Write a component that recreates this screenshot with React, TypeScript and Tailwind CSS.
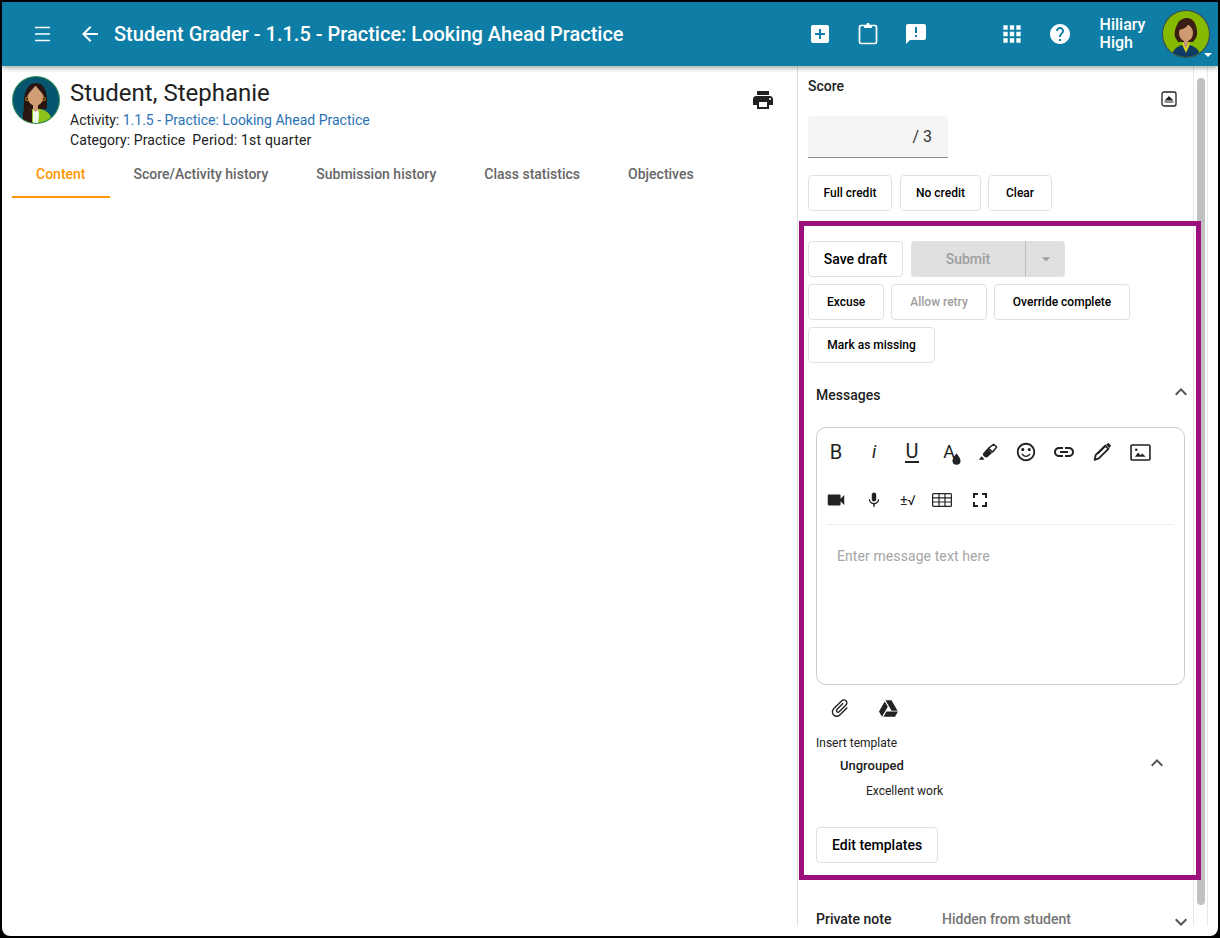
import { MdArrowBack, MdAddBox, MdAnnouncement, MdApps, MdHelp, MdPrint, MdExpandLess, MdExpandMore, MdSentimentSatisfiedAlt, MdLink, MdVideocam, MdMic, MdFullscreen, MdAttachFile, MdArrowDropDown } from 'react-icons/md'
import { FaGoogleDrive } from 'react-icons/fa'
import type { ReactNode } from 'react'

function StudentAvatar() {
  return (
    <svg viewBox="0 0 48 48" className="w-12 h-12 shrink-0">
      <defs>
        <clipPath id="sa"><circle cx="24" cy="24" r="23" /></clipPath>
      </defs>
      <circle cx="24" cy="24" r="24" fill="#2e8b57" />
      <circle cx="24" cy="24" r="23" fill="#07566f" />
      <g clipPath="url(#sa)">
        <path d="M12 26c0-12 5-19 12-19s11 7 11 17v9H22v15H11z" fill="#2a1512" />
        <path d="M11 48c0-9 3-13 9-15h8c8 2 12 6 12 15z" fill="#8cc21a" />
        <path d="M11 36l9-3v15h-9z" fill="#2a1512" />
        <path d="M21 33h5l1 5-1 10h-5z" fill="#eef5ea" />
        <path d="M21 27h5v7l-2.500 2-2.500-2z" fill="#cf9a72" />
        <ellipse cx="23.500" cy="20" rx="8" ry="10" fill="#d29e75" />
        <path d="M15.500 20c0-6 3-11 8-11-2 4-6 6-8 11zM31.500 20c0-6-3-11-8-11 2 4 6 6 8 11z" fill="#2a1512" />
        <circle cx="15.500" cy="23" r="1.800" fill="none" stroke="#c9962a" strokeWidth=".9" />
        <circle cx="31.500" cy="23" r="1.800" fill="none" stroke="#c9962a" strokeWidth=".9" />
      </g>
    </svg>
  )
}

function TeacherAvatar() {
  return (
    <svg viewBox="0 0 48 48" className="w-12 h-12">
      <defs>
        <clipPath id="ta"><circle cx="24" cy="24" r="23" /></clipPath>
      </defs>
      <circle cx="24" cy="24" r="24" fill="#3b4a4f" />
      <circle cx="24" cy="24" r="23" fill="#86ba00" />
      <g clipPath="url(#ta)">
        <path d="M13 27c-1-4 0-8 2-12 2-5 6-7 10-7s8 3 9 8c1 4 2 8 0 12l-3 4H16z" fill="#3a1d14" />
        <path d="M10 48c0-8 4-11 10-13h8c6 2 10 5 10 13z" fill="#0f3a63" />
        <path d="M20 34l4 9 4-9-2-2h-4z" fill="#d8d81c" />
        <path d="M22 29h4v6l-2 3-2-3z" fill="#c4936e" />
        <ellipse cx="24" cy="23" rx="7" ry="8.500" fill="#cf9a72" />
        <path d="M16 20c3 0 9-2 11-7 1 3 3 5 5 7-1-7-4-10-8-10s-8 3-8 10z" fill="#3a1d14" />
      </g>
    </svg>
  )
}

function OutlineBtn({ children, muted, big, className = '' }: { children: ReactNode; muted?: boolean; big?: boolean; className?: string }) {
  return (
    <div className={`h-9 flex items-center justify-center bg-white border border-[#e0e0e0] rounded font-medium ${big ? 'text-sm px-[15px]' : 'text-xs px-[18px]'} ${muted ? 'text-[#9e9e9e]' : 'text-black'} ${className}`}>
      {children}
    </div>
  )
}

function ToolBtn({ children, w = 'w-[38px]' }: { children: ReactNode; w?: string }) {
  return <div className={`${w} h-12 flex items-center justify-center text-[#222222]`}>{children}</div>
}

export default function App() {
  return (
    <div className="relative w-[1220px] h-[938px] bg-black pt-[2px] px-[2px] pb-[2px] overflow-hidden [font-family:Roboto,sans-serif] text-[#212121]">
      <div className="h-[934px] bg-white rounded-b-lg overflow-hidden flex flex-col">
        <header className="relative z-10 h-16 shrink-0 bg-[#0e7ea6] text-white flex items-center shadow-[0_2px_5px_rgba(0,0,0,0.35)]">
          <svg viewBox="0 0 24 24" className="w-6 h-6 ml-[28px]" stroke="white" strokeWidth="1.600">
            <path d="M5 5.500h15M5 12h15M5 18.500h15" />
          </svg>
          <MdArrowBack className="w-6 h-6 ml-[24px]" />
          <span className="ml-[12px] text-xl font-medium whitespace-nowrap">Student Grader - 1.1.5 - Practice: Looking Ahead Practice</span>
          <MdAddBox className="w-6 h-6 ml-[184px]" />
          <svg viewBox="0 0 24 24" className="w-6 h-6 ml-[24px]" fill="none" stroke="white" strokeWidth="1.700">
            <rect x="3.500" y="3.500" width="17" height="18" rx="1.500" />
            <path d="M8.500 5.500V3.500H11V1.500h2v2h2.500v2z" fill="white" strokeWidth="1" />
          </svg>
          <MdAnnouncement className="w-6 h-6 ml-[24px]" />
          <MdApps className="w-[26px] h-[26px] ml-[71px]" />
          <MdHelp className="w-6 h-6 ml-[23px]" />
          <div className="ml-[28px] w-[62px] text-base leading-[18px] font-medium">Hiliary High</div>
          <div className="relative">
            <TeacherAvatar />
            <div className="absolute right-[-2px] bottom-[1px] w-0 h-0 border-x-[4px] border-x-transparent border-t-[4px] border-t-white" />
          </div>
        </header>
        <main className="flex-1 min-h-0 flex">
          <section className="w-[795px] shrink-0 pl-[10px] pt-[10px]">
            <div className="flex gap-[10px]">
              <StudentAvatar />
              <div className="flex-1">
                <h1 className="text-2xl leading-[34px]">Student, Stephanie</h1>
                <div className="text-sm leading-5">
                  Activity: <span className="text-[#2a72b5]">1.1.5 - Practice: Looking Ahead Practice</span>
                </div>
                <div className="text-sm leading-5 tracking-[0.08px]">Category: Practice<span className="ml-[7px] tracking-[0.2px]">Period: 1st quarter</span></div>
              </div>
              <MdPrint className="w-6 h-6 mt-[12px] mr-[22px] text-[#212121]" />
            </div>
            <nav className="flex h-12 text-sm font-medium text-[#666666]">
              <div className="px-6 pt-[2px] flex items-center text-[#ff9800] border-b-2 border-[#ff9800]">Content</div>
              <div className="px-6 flex items-center">Score/Activity history</div>
              <div className="px-6 flex items-center">Submission history</div>
              <div className="px-6 flex items-center">Class statistics</div>
              <div className="px-6 flex items-center">Objectives</div>
            </nav>
          </section>
          <aside className="flex-1 min-w-0 h-[860px] flex pr-[10px]">
            <div className="flex-1 min-w-0 border-l border-[#e0e0e0] overflow-hidden">
              <div className="pl-[10px] pt-[12px] relative">
                <div className="text-sm font-medium leading-4">Score</div>
                <div className="absolute right-[16px] top-[25px]">
                  <svg viewBox="0 0 16 16" className="w-4 h-4" fill="none">
                    <rect x="1" y="1" width="14" height="14" rx="2" stroke="#212121" strokeWidth="1.300" />
                    <path d="M3.500 9.500 8 5l4.500 4.500zM3.500 10.500h9v1h-9z" fill="#212121" />
                  </svg>
                </div>
                <div className="mt-[22px] w-[140px] h-[42px] bg-[#f5f5f5] border-b border-[#8a8a8a] rounded-t flex items-center justify-end pr-4 text-base text-[#333333]">/ 3</div>
                <div className="mt-[17px] flex gap-[7px]">
                  <OutlineBtn className="w-[84px] mr-[1px] !px-0">Full credit</OutlineBtn>
                  <OutlineBtn className="w-[81px] !px-0">No credit</OutlineBtn>
                  <OutlineBtn className="w-[64px] !px-0">Clear</OutlineBtn>
                </div>
                <div className="mt-[30px] flex gap-2">
                  <OutlineBtn big className="w-[95px] !px-0">Save draft</OutlineBtn>
                  <div className="h-9 w-[154px] flex bg-[#e0e0e0] rounded text-sm font-medium text-[#9e9e9e]">
                    <div className="w-[115px] flex items-center justify-center border-r border-[#bdbdbd]">Submit</div>
                    <div className="flex-1 flex items-center justify-center">
                      <MdArrowDropDown className="w-5 h-5 text-[#9e9e9e]" />
                    </div>
                  </div>
                </div>
                <div className="mt-[7px] flex gap-[7px]">
                  <OutlineBtn>Excuse</OutlineBtn>
                  <OutlineBtn muted>Allow retry</OutlineBtn>
                  <OutlineBtn>Override complete</OutlineBtn>
                </div>
                <div className="mt-[7px] flex">
                  <OutlineBtn className="w-[127px] !px-0">Mark as missing</OutlineBtn>
                </div>
                <div className="pl-2 mt-[24px] flex items-center justify-between h-4">
                  <span className="text-sm font-medium">Messages</span>
                  <MdExpandLess className="w-6 h-6 text-[#555555] -mt-[7px]" />
                </div>
                <div className="ml-2 mr-2 mt-[24px] w-[369px] h-[258px] border border-[#cccccc] rounded-[10px] flex flex-col">
                  <div className="flex h-12">
                    <ToolBtn><span className="text-xl font-normal">B</span></ToolBtn>
                    <ToolBtn><span className="text-lg italic">i</span></ToolBtn>
                    <ToolBtn><span className="text-xl border-b-2 border-[#222222] leading-[20px] px-[1px]">U</span></ToolBtn>
                    <ToolBtn>
                      <span className="relative text-lg leading-none -ml-[2px]">
                        A
                        <svg viewBox="0 0 10 13" className="absolute -right-[6px] -bottom-[4px] w-[9px] h-3"><path d="M5 0c2 3 4.500 5.500 4.500 8.500a4.500 4.500 0 0 1-9 0C.5 5.500 3 3 5 0z" fill="#222222" /></svg>
                      </span>
                    </ToolBtn>
                    <ToolBtn>
                      <svg viewBox="0 0 24 24" className="w-[22px] h-[22px]" fill="#222222">
                        <path d="M12.500 8 18 3.500l3.500 3L17 12z" fill="none" stroke="#222222" strokeWidth="1.600" strokeLinejoin="round" />
                        <path d="m6.500 13.500 5-5.500 5 5-5.500 5-2.500-.500-2-2zM5 16.500l3 3-1.500 1H2z" />
                      </svg>
                    </ToolBtn>
                    <ToolBtn><MdSentimentSatisfiedAlt className="w-[22px] h-[22px]" /></ToolBtn>
                    <ToolBtn><MdLink className="w-6 h-6" /></ToolBtn>
                    <ToolBtn>
                      <svg viewBox="0 0 24 24" className="w-[22px] h-[22px]">
                        <path d="M4 20.500l1-5L15.500 5l3.500 3.500L8.500 19z" fill="none" stroke="#222222" strokeWidth="2" strokeLinejoin="round" />
                        <path d="M7 13.500l8-8 1 1-8 8z" fill="#222222" />
                        <path d="M16.500 4 18 2.600c.5-.5 1.200-.5 1.700 0l1.700 1.700c.5.5.5 1.200 0 1.700L20 7.500z" fill="#222222" />
                      </svg>
                    </ToolBtn>
                    <ToolBtn>
                      <svg viewBox="0 0 22 18" className="w-[21px] h-[17px]">
                        <rect x="1" y="1" width="20" height="16" rx="1" fill="none" stroke="#222222" strokeWidth="1.700" />
                        <path d="M5 13.500 8.500 9l2.500 3 2-2 3.500 3.500z" fill="#222222" />
                        <circle cx="6.500" cy="6" r="1.300" fill="#222222" />
                      </svg>
                    </ToolBtn>
                  </div>
                  <div className="flex h-12">
                    <ToolBtn><MdVideocam className="w-[22px] h-[22px]" /></ToolBtn>
                    <ToolBtn><MdMic className="w-[18px] h-[18px]" /></ToolBtn>
                    <ToolBtn w="w-[30px]"><span className="text-sm whitespace-nowrap">±√</span></ToolBtn>
                    <ToolBtn w="w-[38px]">
                      <svg viewBox="0 0 20 14" className="w-5 h-[14px]" fill="none" stroke="#222222" strokeWidth="1.200">
                        <rect x=".6" y=".6" width="18.800" height="12.800" rx="1" />
                        <path d="M.6 4.800h18.800M.6 9h18.800M7 .6v12.800M13 .6v12.800" />
                      </svg>
                    </ToolBtn>
                    <ToolBtn><MdFullscreen className="w-[24px] h-[24px]" /></ToolBtn>
                  </div>
                  <div className="mx-[10px] border-t border-[#eeeeee]" />
                  <div className="pl-5 pt-[23px] text-sm leading-4 text-[#a6a6a6] tracking-[0.09px]">Enter message text here</div>
                </div>
                <div className="flex ml-2 mt-[11px] h-6 items-center text-[#222222]">
                  <div className="w-12 flex justify-center"><MdAttachFile className="w-[22px] h-[22px] rotate-45" /></div>
                  <div className="w-12 flex justify-center"><FaGoogleDrive className="w-[19px] h-[19px]" /></div>
                </div>
                <div className="ml-2 mt-[16px] text-xs leading-[14px]">Insert template</div>
                <div className="ml-8 mr-[24px] mt-[8px] flex items-center justify-between h-4">
                  <span className="text-[13px] font-medium">Ungrouped</span>
                  <MdExpandLess className="w-6 h-6 text-[#555555] -mt-[6px]" />
                </div>
                <div className="ml-[58px] mt-[10px] text-xs leading-[14px]">Excellent work</div>
                <div className="ml-2 mt-[29px] flex">
                  <OutlineBtn big>Edit templates</OutlineBtn>
                </div>
                <div className="pl-2 mt-[44px] flex items-center text-sm font-medium">
                  <span className="w-[126px]">Private note</span>
                  <span className="text-[#757575]">Hidden from student</span>
                  <MdExpandMore className="w-6 h-6 ml-auto text-[#555555] translate-y-[3px]" />
                </div>
              </div>
            </div>
            <div className="w-[15px] shrink-0 border-x border-[#e8e8e8] px-[3px] pt-[12px]">
              <div className="w-2 h-[827px] rounded bg-[#c1c1c1]" />
            </div>
          </aside>
        </main>
      </div>
      <div className="absolute left-[799px] top-[221px] w-[402px] h-[659px] border-[5px] border-[#9c0f7c]" />
    </div>
  )
}
